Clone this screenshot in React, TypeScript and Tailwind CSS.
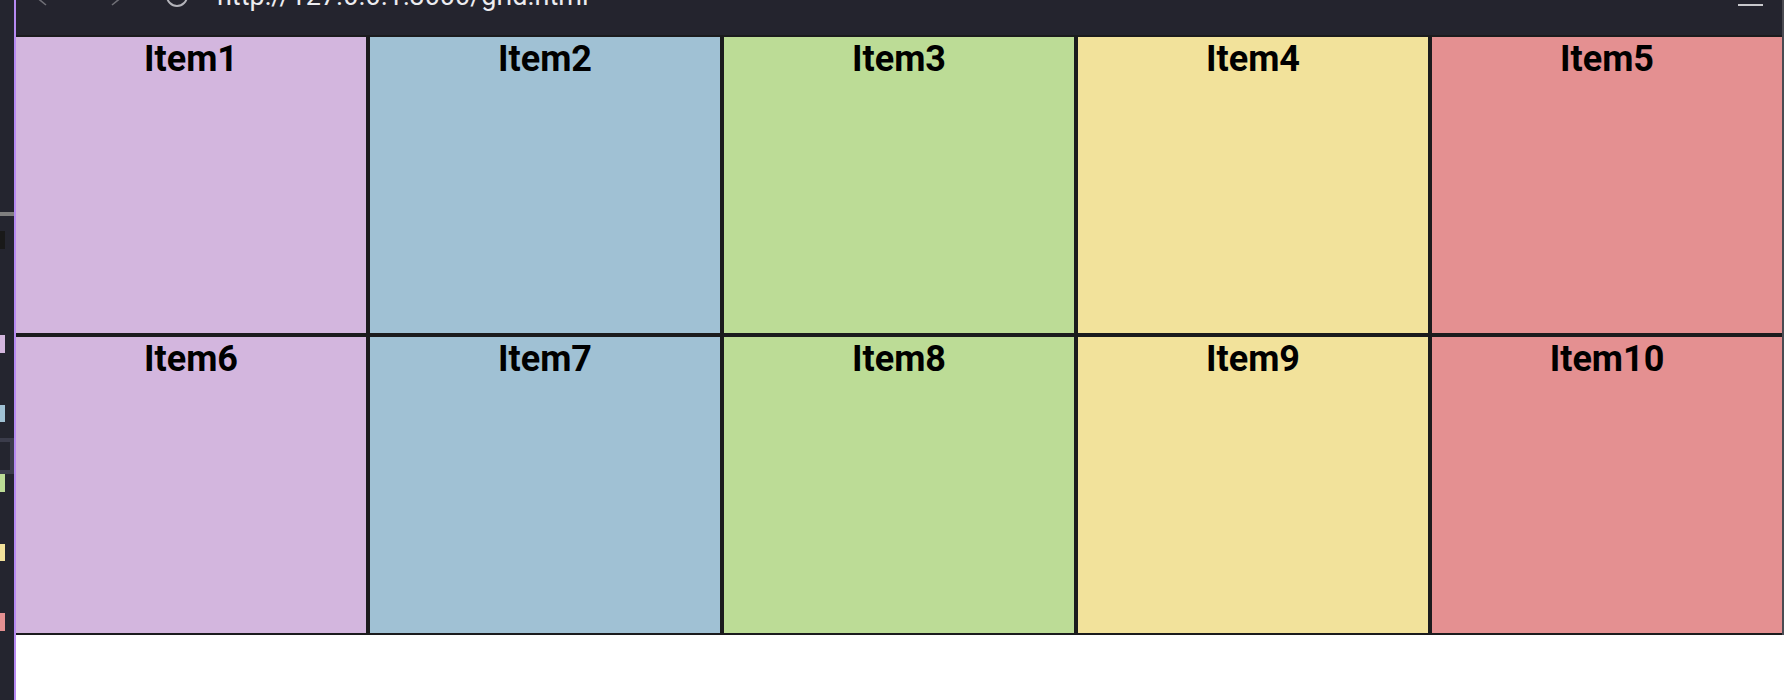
import React from "react";

const items = [
  { label: "Item1", bg: "bg-[#d3b6de]" },
  { label: "Item2", bg: "bg-[#a0c1d4]" },
  { label: "Item3", bg: "bg-[#bcdc96]" },
  { label: "Item4", bg: "bg-[#f2e29b]" },
  { label: "Item5", bg: "bg-[#e49091]" },
  { label: "Item6", bg: "bg-[#d3b6de]" },
  { label: "Item7", bg: "bg-[#a0c1d4]" },
  { label: "Item8", bg: "bg-[#bcdc96]" },
  { label: "Item9", bg: "bg-[#f2e29b]" },
  { label: "Item10", bg: "bg-[#e49091]" },
];

function Sidebar() {
  return (
    <div className="flex w-[14px] shrink-0 flex-col bg-[#24252f]">
      <div className="mt-[212px] h-[4px] w-[14px] bg-[#7f7f7f]" />
      <div className="mt-[15px] h-[18px] w-[5px] bg-[#191919]" />
      <div className="mt-[86px] h-[18px] w-[5px] bg-[#d3b6de]" />
      <div className="mt-[52px] h-[17px] w-[5px] bg-[#a0c1d4]" />
      <div className="mt-[16px] h-[36px] w-[14px] border-y-4 border-r-4 border-[#3b3c4b] bg-[#24252f]" />
      <div className="h-[18px] w-[5px] bg-[#bcdc96]" />
      <div className="mt-[52px] h-[17px] w-[5px] bg-[#f2e29b]" />
      <div className="mt-[52px] h-[18px] w-[5px] bg-[#e49091]" />
    </div>
  );
}

function TopBar() {
  return (
    <div className="flex h-[35px] shrink-0 items-start overflow-hidden bg-[#24242e]">
      <svg className="ml-[20px] mt-[-14px] shrink-0" width="12" height="20" viewBox="0 0 12 20" fill="none">
        <path d="M10 1 L2 12.5 L10 19" stroke="#6f6f76" strokeWidth="1.6" />
      </svg>
      <svg className="ml-[62px] mt-[-14px] shrink-0" width="12" height="20" viewBox="0 0 12 20" fill="none">
        <path d="M2 1 L10 12.5 L2 19" stroke="#6f6f76" strokeWidth="1.6" />
      </svg>
      <svg className="ml-[43px] mt-[-16px] shrink-0" width="24" height="24" viewBox="0 0 24 24" fill="none">
        <circle cx="12" cy="12" r="10" stroke="#b4b4ba" strokeWidth="2" />
      </svg>
      <div
        className="ml-[28px] mt-[-20px] shrink-0 whitespace-nowrap text-[27px] leading-[32px] text-[#ececf0]"
        style={{ fontFamily: "Roboto, 'Noto Sans', sans-serif" }}
      >
        http://127.0.0.1:3000/grid.html
      </div>
      <div className="ml-auto mr-[19px] mt-[4px] h-[2px] w-[25px] shrink-0 bg-[#c8c8cc]" />
    </div>
  );
}

export default function App() {
  return (
    <div className="flex h-[700px] w-[1784px] overflow-hidden bg-white">
      <Sidebar />
      <div className="w-[2px] shrink-0 bg-[#b68af2]" />
      <div className="flex w-[1766px] shrink-0 flex-col overflow-hidden">
        <TopBar />
        <div className="ml-[-2px] grid w-[1770px] grid-cols-[repeat(5,354px)]">
          {items.map((it) => (
            <div
              key={it.label}
              className={`h-[300px] border-2 border-[#1b1b1d] ${it.bg} pt-[1px] text-center`}
            >
              <div
                className="text-[36px] font-bold leading-[42px] text-black"
                style={{ fontFamily: "Roboto, 'Noto Sans', sans-serif" }}
              >
                {it.label}
              </div>
            </div>
          ))}
        </div>
      </div>
      <div className="flex w-[2px] shrink-0 flex-col">
        <div className="h-[635px] bg-[#4b4b52]" />
      </div>
    </div>
  );
}
